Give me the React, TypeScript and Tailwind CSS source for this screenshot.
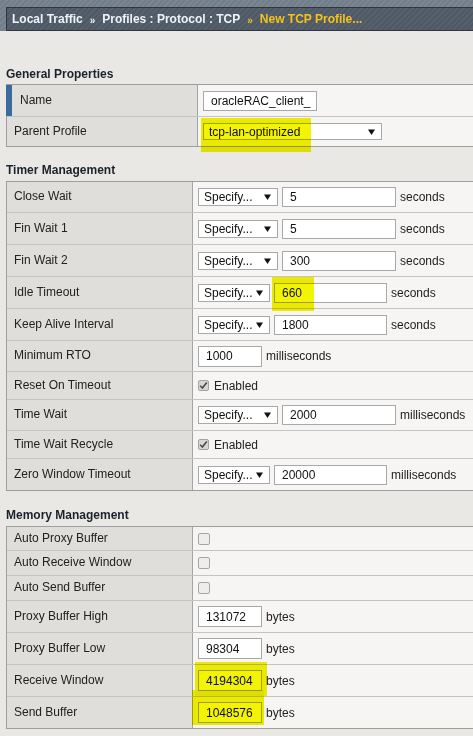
import React from "react";

type Row = {
  label: string;
  h: string;
  content: React.ReactNode;
};

const Arrow = () => (
  <svg width="7" height="6" viewBox="0 0 7 6" className="shrink-0">
    <path d="M0 0.5 L7 0.5 L3.5 6 Z" fill="#111" />
  </svg>
);

const Select = ({ w, text, h = "h-[18px]" }: { w: string; text: string; h?: string }) => (
  <div className={`${w} ${h} bg-white border border-[#a9a9a9] flex items-center justify-between pl-[5px] pr-[6px] text-[#111]`}>
    <span className="leading-none">{text}</span>
    <Arrow />
  </div>
);

const Input = ({ w, value, h = "h-[20px]" }: { w: string; value: string; h?: string }) => (
  <div className={`${w} ${h} bg-white border border-[#a9a9a9] flex items-center pl-[7px] text-[#111] overflow-hidden whitespace-nowrap`}>
    <span className="leading-none">{value}</span>
  </div>
);

const Unit = ({ children }: { children: React.ReactNode }) => (
  <span className="ml-[4px] text-[#222]">{children}</span>
);

const CheckOn = () => (
  <div className="flex items-center">
    <div className="w-[11px] h-[11px] rounded-[2px] border border-[#a3a3a3] bg-[#d6d6d6] flex items-center justify-center">
      <svg width="9" height="9" viewBox="0 0 9 9">
        <path d="M1.2 4.8 L3.4 7 L7.8 1.4" fill="none" stroke="#4a4a4a" strokeWidth="1.6" />
      </svg>
    </div>
    <span className="ml-[5px] text-[#222]">Enabled</span>
  </div>
);

const CheckOff = () => (
  <div className="w-[12px] h-[12px] rounded-[2px] border border-[#a6a6a6] bg-[#ededed]" />
);

const Highlight = ({ cls }: { cls: string }) => (
  <div className={`absolute ${cls} bg-[#f3f305] mix-blend-multiply pointer-events-none z-10`} />
);

const Sel = ({ narrow, value, unit }: { narrow?: boolean; value: string; unit: string }) => (
  <div className="flex items-center">
    <Select w={narrow ? "w-[72px]" : "w-[80px]"} text="Specify..." />
    <div className="ml-[4px]">
      <Input w={narrow ? "w-[113px]" : "w-[114px]"} value={value} />
    </div>
    <Unit>{unit}</Unit>
  </div>
);

const Small = ({ value, unit }: { value: string; unit: string }) => (
  <div className="flex items-center">
    <Input w="w-[64px]" h="h-[21px]" value={value} />
    <Unit>{unit}</Unit>
  </div>
);

const Table = ({ rows, labelW }: { rows: (Row & { hl?: string; blue?: boolean })[]; labelW: string }) => (
  <div className="ml-[6px] w-[480px] border border-r-0 border-[#9e9e9e]">
    {rows.map((r, i) => (
      <div key={r.label} className={`flex ${r.h} ${i > 0 ? "border-t border-[#c4c4c4]" : ""}`}>
        <div className={`${labelW} shrink-0 bg-[#dfdedb] border-r border-[#a4a4a4] flex items-center text-[#222]`}>
          {r.blue ? (
            <>
              <div className="-ml-px w-[6px] self-stretch bg-[#3b6a9c]" />
              <span className="pl-[8px] pb-[1px]">{r.label}</span>
            </>
          ) : (
            <span className="pl-[7px] pb-[2px]">{r.label}</span>
          )}
        </div>
        <div className="relative flex-1 bg-[#f6f5f3] flex items-center pl-[5px]">
          {r.content}
          {r.hl && <Highlight cls={r.hl} />}
        </div>
      </div>
    ))}
  </div>
);

const Title = ({ children, mt }: { children: React.ReactNode; mt: string }) => (
  <div className={`${mt} pl-[6px] font-bold text-[#1b222b] leading-[14px]`}>{children}</div>
);

export default function App() {
  const general = [
    {
      label: "Name",
      h: "h-[31px]",
      blue: true,
      content: <Input w="w-[114px]" value="oracleRAC_client_" />,
    },
    {
      label: "Parent Profile",
      h: "h-[30px]",
      content: <Select w="w-[179px]" h="h-[17px]" text="tcp-lan-optimized" />,
      hl: "left-[3px] top-[1px] w-[110px] h-[34px]",
    },
  ];

  const timer = [
    { label: "Close Wait", h: "h-[30px]", content: <Sel value="5" unit="seconds" /> },
    { label: "Fin Wait 1", h: "h-[32px]", content: <Sel value="5" unit="seconds" /> },
    { label: "Fin Wait 2", h: "h-[32px]", content: <Sel value="300" unit="seconds" /> },
    {
      label: "Idle Timeout",
      h: "h-[32px]",
      content: <Sel narrow value="660" unit="seconds" />,
      hl: "left-[79px] top-0 w-[42px] h-[34px]",
    },
    { label: "Keep Alive Interval", h: "h-[32px]", content: <Sel narrow value="1800" unit="seconds" /> },
    { label: "Minimum RTO", h: "h-[31px]", content: <Small value="1000" unit="milliseconds" /> },
    { label: "Reset On Timeout", h: "h-[28px]", content: <CheckOn /> },
    { label: "Time Wait", h: "h-[31px]", content: <Sel value="2000" unit="milliseconds" /> },
    { label: "Time Wait Recycle", h: "h-[28px]", content: <CheckOn /> },
    { label: "Zero Window Timeout", h: "h-[32px]", content: <Sel narrow value="20000" unit="milliseconds" /> },
  ];

  const memory = [
    { label: "Auto Proxy Buffer", h: "h-[23px]", content: <CheckOff /> },
    { label: "Auto Receive Window", h: "h-[25px]", content: <CheckOff /> },
    { label: "Auto Send Buffer", h: "h-[25px]", content: <CheckOff /> },
    { label: "Proxy Buffer High", h: "h-[32px]", content: <Small value="131072" unit="bytes" /> },
    { label: "Proxy Buffer Low", h: "h-[32px]", content: <Small value="98304" unit="bytes" /> },
    {
      label: "Receive Window",
      h: "h-[32px]",
      content: <Small value="4194304" unit="bytes" />,
      hl: "left-[2px] top-[-3px] w-[72px] h-[34px]",
    },
    {
      label: "Send Buffer",
      h: "h-[32px]",
      content: <Small value="1048576" unit="bytes" />,
      hl: "left-[-1px] top-[-7px] w-[72px] h-[35px]",
    },
  ];

  return (
    <div className="w-[473px] h-[736px] overflow-hidden bg-[#e9e8e4] text-[12px] font-['Liberation_Sans',Arial,sans-serif]">
      <div className="h-[31px] pt-[7px] pl-[6px] bg-[repeating-linear-gradient(135deg,#7b8693_0px,#7b8693_2px,#727d8a_2px,#727d8a_4px)]">
        <div className="h-[24px] w-[480px] border border-r-0 border-[#2f363f] bg-[repeating-linear-gradient(135deg,#4e5965_0px,#4e5965_2px,#56616d_2px,#56616d_4px)] flex items-center pl-[5px] pb-[1px] font-bold whitespace-nowrap">
          <span className="text-[#eef3f9]">Local Traffic</span>
          <span className="text-[#eef3f9] text-[10px] mx-[7px] mt-[3px]">»</span>
          <span className="text-[#eef3f9]">Profiles : Protocol : TCP</span>
          <span className="text-[#f4c21a] text-[10px] mx-[7px] mt-[3px]">»</span>
          <span className="text-[#f4c21a]">New TCP Profile...</span>
        </div>
      </div>

      <Title mt="mt-[36px]">General Properties</Title>
      <div className="mt-[3px]">
        <Table rows={general} labelW="w-[191px]" />
      </div>

      <Title mt="mt-[16px]">Timer Management</Title>
      <div className="mt-[4px]">
        <Table rows={timer} labelW="w-[186px]" />
      </div>

      <Title mt="mt-[17px]">Memory Management</Title>
      <div className="mt-[4px]">
        <Table rows={memory} labelW="w-[186px]" />
      </div>
    </div>
  );
}
